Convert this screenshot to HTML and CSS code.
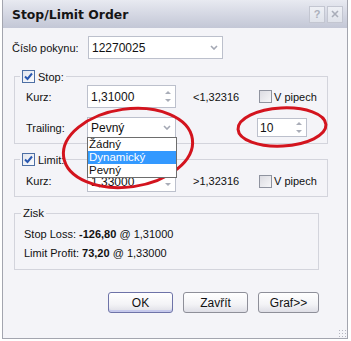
FILE: index.html
```html
<!DOCTYPE html>
<html lang="cs">
<head>
  <meta charset="UTF-8" />
  <title>Stop/Limit Order</title>
  <link rel="stylesheet" href="styles.css">
</head>
<body>
  <div class="window">
    <div class="titlebar">
      <span class="title">Stop/Limit Order</span>
      <span class="tb-btn help">?</span>
      <span class="tb-btn close">
        <svg width="8" height="8" viewBox="0 0 8 8"><path d="M1 1L7 7M7 1L1 7" stroke="#a9adb9" stroke-width="1.6"/></svg>
      </span>
    </div>

    <div class="content">
      <div class="row order-row">
        <span class="lbl order-lbl">Číslo pokynu:</span>
        <div class="combo order-combo">
          <span class="val">12270025</span>
          <span class="arrow"><svg width="8" height="5" viewBox="0 0 8 5"><path d="M1 1L4 4L7 1" fill="none" stroke="#a4a8b4" stroke-width="1.6"/></svg></span>
        </div>
      </div>

      <fieldset class="group stop-group">
        <legend><span class="check on"><svg width="11" height="11" viewBox="0 0 11 11"><path d="M2 5.5L4.5 8L9 2.5" fill="none" stroke="#2a58b0" stroke-width="2"/></svg></span>Stop:</legend>
        <div class="row kurz-row">
          <span class="lbl">Kurz:</span>
          <div class="spin field">
            <span class="val">1,31000</span>
            <span class="spin-btns"><i class="up"></i><i class="down"></i></span>
          </div>
          <span class="ref">&lt;1,32316</span>
          <span class="check"></span>
          <span class="chk-lbl">V pipech</span>
        </div>
        <div class="row trail-row">
          <span class="lbl">Trailing:</span>
          <div class="combo field trail-combo">
            <span class="val">Pevný</span>
            <span class="arrow"><svg width="8" height="5" viewBox="0 0 8 5"><path d="M1 1L4 4L7 1" fill="none" stroke="#a4a8b4" stroke-width="1.6"/></svg></span>
            <ul class="dropdown">
              <li>Žádný</li>
              <li class="sel">Dynamický</li>
              <li>Pevný</li>
            </ul>
          </div>
          <div class="spin pips">
            <span class="val">10</span>
            <span class="spin-btns"><i class="up"></i><i class="down"></i></span>
          </div>
        </div>
      </fieldset>

      <fieldset class="group limit-group">
        <legend><span class="check on"><svg width="11" height="11" viewBox="0 0 11 11"><path d="M2 5.5L4.5 8L9 2.5" fill="none" stroke="#2a58b0" stroke-width="2"/></svg></span>Limit:</legend>
        <div class="row kurz-row limit-kurz">
          <span class="lbl">Kurz:</span>
          <div class="spin field">
            <span class="val">1,33000</span>
            <span class="spin-btns"><i class="up"></i><i class="down"></i></span>
          </div>
          <span class="ref">&gt;1,32316</span>
          <span class="check"></span>
          <span class="chk-lbl">V pipech</span>
        </div>
      </fieldset>

      <fieldset class="group zisk-group">
        <legend class="zisk-legend">Zisk</legend>
        <div class="zisk-line">Stop Loss: <b>-126,80</b> @ 1,31000</div>
        <div class="zisk-line">Limit Profit: <b>73,20</b> @ 1,33000</div>
      </fieldset>

      <div class="buttons">
        <button class="btn default">OK</button>
        <button class="btn">Zavřít</button>
        <button class="btn graf">Graf&gt;&gt;</button>
      </div>
    </div>

    <span class="grip"></span>
  </div>

  <!-- red marker circles drawn over the screenshot -->
  <svg class="marks" width="351" height="341" viewBox="0 0 351 341">
    <ellipse cx="128" cy="148" rx="65" ry="39" transform="rotate(-8 128 148)" fill="none" stroke="#d3141e" stroke-width="3"/>
    <ellipse cx="282" cy="127" rx="44" ry="19" transform="rotate(-3 282 127)" fill="none" stroke="#d3141e" stroke-width="3"/>
  </svg>
</body>
</html>
```

FILE: styles.css
```css
body {
  margin: 0;
  background: #fff;
  font-family: "Liberation Sans", Arial, sans-serif;
  font-size: 11px;
  color: #111;
  position: relative;
}
.window {
  position: relative;
  width: 346px;
  height: 339px;
  margin-left: 2px;
  box-sizing: border-box;
  border: 1px solid #a3a5af;
  border-top: none;
  background: #f4f4f8;
}
.titlebar {
  height: 28px;
  display: flex;
  align-items: center;
  padding: 0 4px 0 9px;
  background: linear-gradient(#e8eaf1, #d3d6e2 55%, #c3c7d6);
}
.title {
  font-family: "DejaVu Sans", sans-serif;
  font-weight: bold;
  font-size: 12.4px;
  color: #151515;
}
.tb-btn {
  width: 16px;
  height: 17px;
  box-sizing: border-box;
  border: 1px solid #c3c6d1;
  background: linear-gradient(#eef0f5, #dfe2ea);
  display: flex;
  align-items: center;
  justify-content: center;
  color: #abafbb;
  font-weight: bold;
  font-size: 11px;
}
.help {
  margin-left: auto;
  margin-right: 2px;
}
.content {
  padding-top: 8px;
}
.row {
  display: flex;
  align-items: center;
}
.lbl {
  width: 61px;
}
.order-row {
  height: 23px;
  padding-left: 9px;
}
.order-lbl {
  width: 76px;
}
.combo, .spin {
  position: relative;
  display: flex;
  align-items: center;
  box-sizing: border-box;
  border: 1px solid #bcc0cc;
  background: #fff;
  padding-left: 3px;
  font-size: 12px;
}
.order-combo {
  width: 135px;
  height: 23px;
}
.arrow {
  margin-left: auto;
  width: 17px;
  display: flex;
  justify-content: center;
}
.field {
  width: 89px;
}
.spin-btns {
  margin-left: auto;
  width: 14px;
  display: flex;
  flex-direction: column;
  align-items: center;
  gap: 5px;
}
.spin-btns i {
  width: 0;
  height: 0;
  border-left: 3px solid transparent;
  border-right: 3px solid transparent;
}
.spin-btns .up {
  border-bottom: 3px solid #a9adb8;
}
.spin-btns .down {
  border-top: 3px solid #a9adb8;
}

.group {
  margin: 11px 0 0 11px;
  padding: 0 0 5px 0;
  border: 1px solid #d3d4dc;
  width: 314px;
  box-sizing: border-box;
  min-width: 0;
}
.group legend {
  margin-left: 5px;
  padding: 0 2px;
  display: flex;
  align-items: center;
  height: 13px;
}
.check {
  width: 13px;
  height: 13px;
  box-sizing: border-box;
  border: 1px solid #8f939f;
  background: linear-gradient(135deg, #dcdce2, #f6f6f8);
  display: inline-flex;
  align-items: center;
  justify-content: center;
}
.check.on {
  border-color: #4d6fa4;
  background: linear-gradient(135deg, #e2e6ee, #fbfbfd);
  margin-right: 3px;
}
.group .row {
  margin-left: 11px;
}
.kurz-row {
  margin-top: 2px;
  height: 23px;
}
.kurz-row .spin {
  height: 23px;
}
.ref {
  margin-left: 17px;
  width: 66px;
}
.chk-lbl {
  margin-left: 2px;
}
.trail-row {
  margin-top: 9px;
  height: 21px;
}
.trail-combo {
  height: 21px;
}
.pips {
  margin-left: 81px;
  width: 50px;
  height: 19px;
  padding-left: 2px;
}
.dropdown {
  position: absolute;
  left: -1px;
  top: 19px;
  width: 90px;
  margin: 0;
  padding: 0;
  list-style: none;
  box-sizing: border-box;
  border: 1px solid #6d6d6d;
  background: #fff;
  font-size: 11.5px;
  z-index: 2;
}
.dropdown li {
  height: 13px;
  line-height: 13px;
  padding-left: 1px;
}
.dropdown .sel {
  background: #3399ff;
  color: #fff;
}

.limit-group {
  margin-top: 9px;
  padding-bottom: 4px;
}
.limit-kurz {
  margin-top: 4px;
  height: 22px;
}
.limit-kurz .spin {
  height: 22px;
  align-items: flex-end;
  padding-bottom: 2px;
}
.limit-kurz .spin-btns {
  align-self: center;
}

.zisk-group {
  margin-top: 9px;
  width: 305px;
  padding: 0 0 6px 9px;
}
.zisk-group .zisk-legend {
  margin-left: -3px;
  height: 14px;
  font-size: 11.5px;
}
.zisk-line {
  line-height: 19px;
  font-size: 11px;
}
.zisk-line:first-of-type {
  margin-top: 5px;
}

.buttons {
  display: flex;
  justify-content: flex-end;
  gap: 10px;
  margin: 22px 28px 0 0;
}
.btn {
  width: 65px;
  height: 21px;
  padding: 0;
  font-family: "Liberation Sans", Arial, sans-serif;
  font-size: 12px;
  color: #111;
  border: 1px solid #8e8f99;
  border-radius: 3px;
  background: linear-gradient(#ffffff, #f3f3f6 60%, #dedee6);
}
.btn.default {
  border-color: #6e73a8;
  box-shadow: inset 0 -2px 0 #c6c9ec;
}
.btn.graf {
  width: 61px;
}
.grip {
  position: absolute;
  right: 1px;
  bottom: 1px;
  width: 8px;
  height: 8px;
  background: radial-gradient(circle, #b4b6c0 0.7px, transparent 1px) 0 0 / 3px 3px;
}
.marks {
  position: absolute;
  left: 0;
  top: 0;
  pointer-events: none;
}
```
